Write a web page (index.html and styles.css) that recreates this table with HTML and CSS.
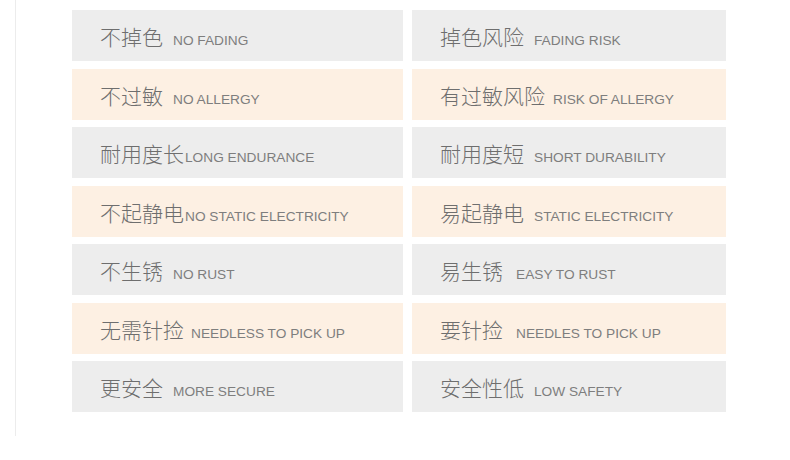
FILE: index.html
```html
<!DOCTYPE html>
<html lang="zh-CN">
<head>
<meta charset="utf-8">
<title>对比</title>
<link rel="stylesheet" href="styles.css">
</head>
<body>
<div class="frame">
  <div class="grid">
    <div class="cell grey"><span class="zh">不掉色</span><span class="en">NO FADING</span></div>
    <div class="cell grey right"><span class="zh">掉色风险</span><span class="en">FADING RISK</span></div>

    <div class="cell beige"><span class="zh">不过敏</span><span class="en">NO ALLERGY</span></div>
    <div class="cell beige right"><span class="zh">有过敏风险</span><span class="en g8">RISK OF ALLERGY</span></div>

    <div class="cell grey"><span class="zh">耐用度长</span><span class="en g1">LONG ENDURANCE</span></div>
    <div class="cell grey right"><span class="zh">耐用度短</span><span class="en">SHORT DURABILITY</span></div>

    <div class="cell beige"><span class="zh">不起静电</span><span class="en g1">NO STATIC ELECTRICITY</span></div>
    <div class="cell beige right"><span class="zh">易起静电</span><span class="en">STATIC ELECTRICITY</span></div>

    <div class="cell grey"><span class="zh">不生锈</span><span class="en">NO RUST</span></div>
    <div class="cell grey right"><span class="zh">易生锈</span><span class="en g13">EASY TO RUST</span></div>

    <div class="cell beige"><span class="zh">无需针捡</span><span class="en g7">NEEDLESS TO PICK UP</span></div>
    <div class="cell beige right"><span class="zh">要针捡</span><span class="en g13">NEEDLES TO PICK UP</span></div>

    <div class="cell grey"><span class="zh">更安全</span><span class="en">MORE SECURE</span></div>
    <div class="cell grey right"><span class="zh">安全性低</span><span class="en">LOW SAFETY</span></div>
  </div>
</div>
</body>
</html>
```
FILE: styles.css
```css
html, body {
  margin: 0;
  padding: 0;
  background: #ffffff;
}

.frame {
  margin-left: 15px;
  height: 436px;
  border-left: 1px solid #ececec;
  box-sizing: border-box;
  padding-top: 10px;
  padding-left: 56px;
}

.grid {
  display: grid;
  grid-template-columns: 331px 314px;
  grid-auto-rows: 51px;
  column-gap: 9px;
  row-gap: 7.5px;
}

.cell {
  display: flex;
  align-items: baseline;
  padding-left: 28px;
  padding-top: 14px;
  box-sizing: border-box;
}

.grey {
  background: #ededed;
}

.beige {
  background: #fdf0e3;
}

.zh {
  font-family: "Noto Sans CJK SC", "Noto Sans", sans-serif;
  font-size: 21px;
  line-height: 24px;
  color: #6e6e6e;
  font-weight: 300;
}

.en {
  font-family: "Liberation Sans", Arial, sans-serif;
  font-size: 13.7px;
  color: #7e7e7e;
  margin-left: 10px;
}

.en.g1 { margin-left: 1px; }
.en.g7 { margin-left: 7px; }
.en.g8 { margin-left: 8px; }
.en.g13 { margin-left: 13px; }
```
